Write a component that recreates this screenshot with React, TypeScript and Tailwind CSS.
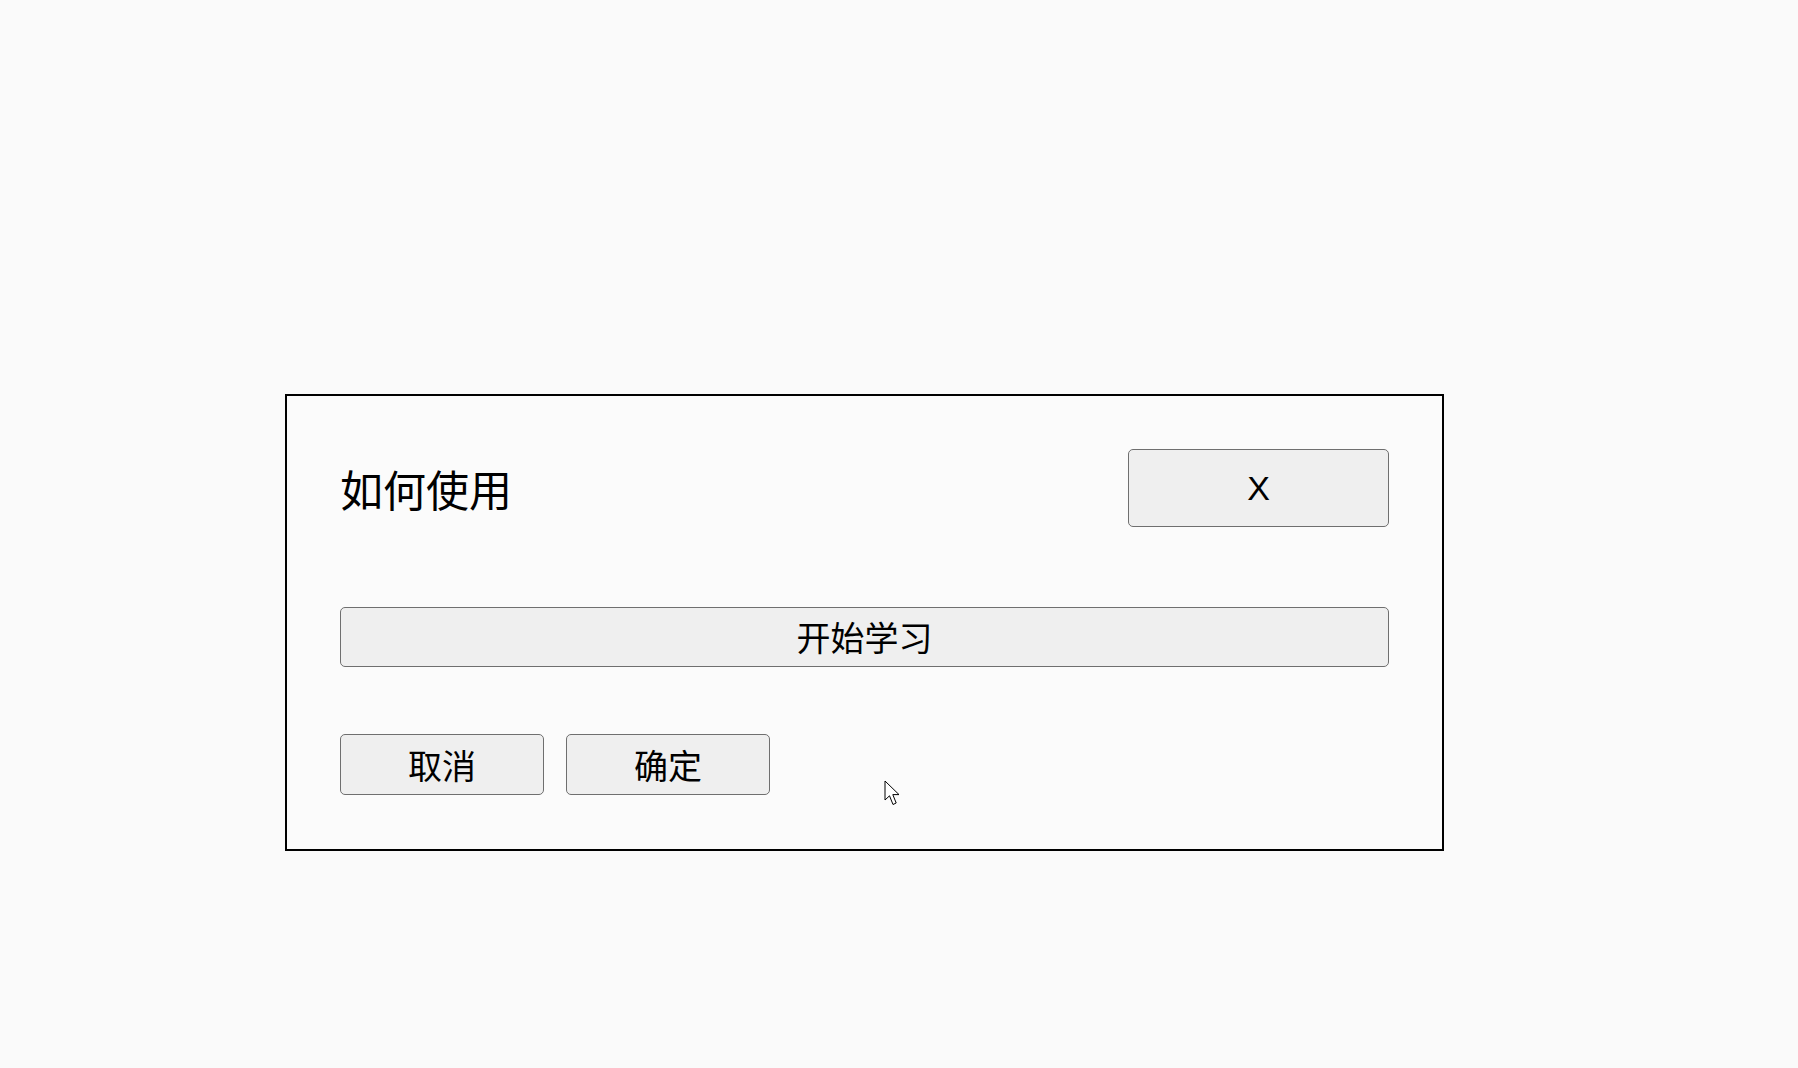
import React from 'react';

const cjk = "font-['Noto_Sans_CJK_SC','Noto_Sans',sans-serif]";

const Btn: React.FC<{ className?: string; children: React.ReactNode }> = ({ className = '', children }) => (
  <button
    className={`flex items-center justify-center bg-[#efefef] border border-[#6f6f6f] rounded-[5px] text-[34px] leading-none text-black ${className}`}
  >
    {children}
  </button>
);

export default function App() {
  return (
    <div className="min-h-screen w-full bg-[#fafafa] pt-[394px] pl-[285px] relative">
      <div className="w-[1159px] h-[457px] border-2 border-black bg-[#fbfbfb] pt-[53px] pl-[53px] pr-[53px] pb-[54px] flex flex-col">
        {/* Header */}
        <div className="flex items-center justify-between h-[78px]">
          <h1 className={`text-[43px] leading-none text-black ${cjk}`}>如何使用</h1>
          <Btn className="w-[261px] h-[78px] font-['Liberation_Sans',sans-serif]">X</Btn>
        </div>

        <Btn className={`mt-[80px] w-full h-[60px] ${cjk}`}>开始学习</Btn>

        <div className="mt-[67px] flex gap-[22px]">
          <Btn className={`w-[204px] h-[61px] ${cjk}`}>取消</Btn>
          <Btn className={`w-[204px] h-[61px] ${cjk}`}>确定</Btn>
        </div>
      </div>

      {/* mouse pointer */}
      <svg className="absolute left-[884px] top-[780px]" width="19" height="28" viewBox="0 0 19 28">
        <path
          d="M1 1 L1 20 L5.5 15.8 L9 24.5 L12.2 23 L8.8 14.6 L15 14.6 Z"
          fill="#ffffff"
          stroke="#000000"
          strokeWidth="1"
          strokeLinejoin="miter"
        />
      </svg>
    </div>
  );
}
